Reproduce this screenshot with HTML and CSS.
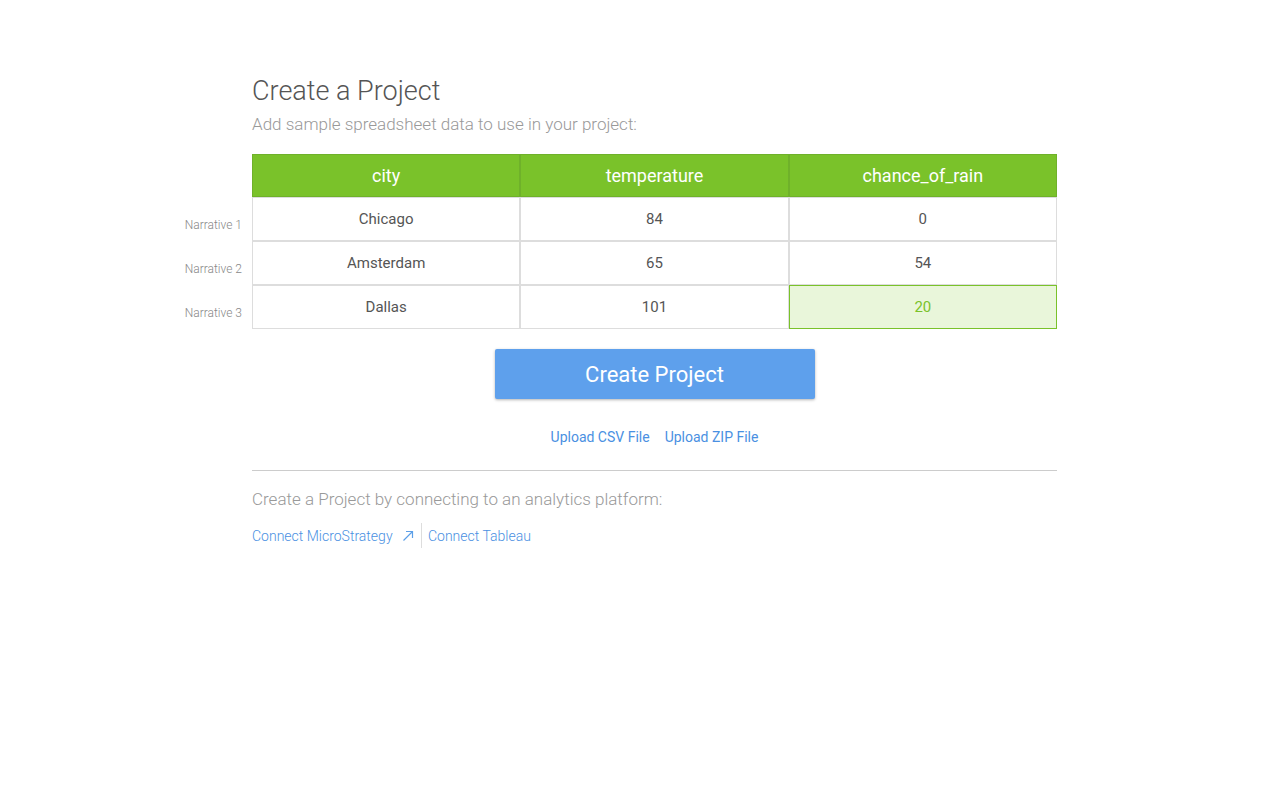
FILE: index.html
```html
<!DOCTYPE html>
<html>
<head>
<meta charset="utf-8">
<link rel="stylesheet" href="styles.css">
</head>
<body>
<div class="page">
  <h1 class="title">Create a Project</h1>
  <p class="subtitle">Add sample spreadsheet data to use in your project:</p>
  <table class="sheet">
    <thead>
      <tr>
        <th class="label"></th>
        <th class="head">city</th>
        <th class="head">temperature</th>
        <th class="head">chance_of_rain</th>
      </tr>
    </thead>
    <tbody>
      <tr>
        <td class="label">Narrative 1</td>
        <td class="cell">Chicago</td>
        <td class="cell">84</td>
        <td class="cell">0</td>
      </tr>
      <tr>
        <td class="label">Narrative 2</td>
        <td class="cell">Amsterdam</td>
        <td class="cell">65</td>
        <td class="cell">54</td>
      </tr>
      <tr>
        <td class="label">Narrative 3</td>
        <td class="cell">Dallas</td>
        <td class="cell">101</td>
        <td class="cell active">20</td>
      </tr>
    </tbody>
  </table>
  <div class="actions">
    <button class="create-btn">Create Project</button>
    <div class="uploads">
      <a class="link" href="#">Upload CSV File</a>
      <a class="link" href="#">Upload ZIP File</a>
    </div>
  </div>
  <hr class="divider">
  <p class="connect-text">Create a Project by connecting to an analytics platform:</p>
  <div class="connects">
    <a class="link light" href="#">Connect MicroStrategy <svg class="ext" width="12" height="12" viewBox="0 0 12 12"><path d="M1.5 10.5 L10.5 1.5 M4 1.5 H10.5 V8" fill="none" stroke="#5c9fe8" stroke-width="1.2"/></svg></a>
    <span class="sep"></span>
    <a class="link light" href="#">Connect Tableau</a>
  </div>
</div>
</body>
</html>
```

FILE: styles.css
```css
* { box-sizing: border-box; }
html, body { margin: 0; padding: 0; background: #fff; }
body { font-family: Roboto, "Open Sans", sans-serif; color: #555; }

.page {
  width: 805px;
  margin-left: 252px;
  padding-top: 73px;
}

.title {
  margin: 0;
  font-weight: 300;
  font-size: 27px;
  line-height: 36px;
  color: #555;
}

.subtitle {
  margin: 0;
  font-weight: 300;
  font-size: 17px;
  line-height: 24px;
  color: #999;
  padding-top: 3px;
}

.sheet {
  margin-top: 18px;
  margin-left: -80px;
  border-collapse: separate;
  border-spacing: 0;
  table-layout: fixed;
  width: 885px;
}

.sheet .label {
  width: 80px;
  text-align: right;
  padding: 12px 10px 0 0;
  font-size: 12px;
  font-weight: 300;
  color: #888;
  border: none;
  background: none;
}

.head {
  height: 43px;
  background: #7ac22a;
  border: 1px solid #6fb12a;
  color: #fff;
  font-size: 18px;
  font-weight: 400;
  text-align: center;
  padding: 0;
}

.cell {
  height: 44px;
  border: 1px solid #dddddd;
  text-align: center;
  font-size: 15px;
  color: #555;
  padding: 0;
}

.cell.active {
  background: #e9f6da;
  border-color: #7ac22a;
  color: #7ac22a;
}

.actions {
  display: flex;
  flex-direction: column;
  align-items: center;
}

.create-btn {
  margin-top: 20px;
  width: 320px;
  height: 50px;
  border: none;
  border-radius: 2px;
  background: #5ea0ec;
  color: #fff;
  font-family: Roboto, sans-serif;
  font-size: 22px;
  font-weight: 400;
  box-shadow: 0 1px 3px rgba(0,0,0,0.3);
}

.uploads {
  margin-top: 28px;
  display: flex;
  gap: 15px;
}

.link {
  color: #4a90e2;
  font-size: 14px;
  text-decoration: none;
  line-height: 20px;
}

.link.light {
  font-weight: 300;
  color: #4a90e2;
}

.divider {
  margin: 23px 0 0 0;
  border: none;
  border-top: 1px solid #cccccc;
  height: 0;
}

.connect-text {
  margin: 16px 0 0 0;
  font-size: 17px;
  font-weight: 300;
  color: #999;
  line-height: 24px;
}

.connects {
  margin-top: 12px;
  display: flex;
  align-items: center;
}

.ext { margin-left: 6px; vertical-align: -1px; }

.sep {
  display: inline-block;
  width: 1px;
  height: 25px;
  background: #ddd;
  margin: 0 6px 0 7px;
}
```
